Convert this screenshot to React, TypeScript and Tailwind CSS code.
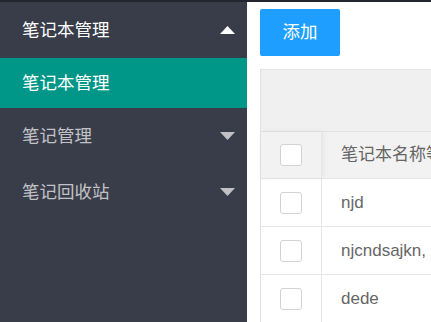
import React from "react";

const font = { fontFamily: '"Liberation Sans", "Noto Sans CJK SC", sans-serif' };

function Tri({ up, color }: { up?: boolean; color: string }) {
  return (
    <svg width="15" height="8" viewBox="0 0 15 8">
      {up ? <polygon points="7.5,0 15,8 0,8" fill={color} /> : <polygon points="0,0 15,0 7.5,8" fill={color} />}
    </svg>
  );
}

function Box() {
  return <div className="w-[22px] h-[22px] border border-[#d2d2d2] rounded-[3px] bg-white" />;
}

export default function App() {
  const rows = ["njd", "njcndsajkn,", "dede"];
  return (
    <div className="w-[431px] h-[322px] flex flex-col overflow-hidden bg-white" style={font}>
      <div className="h-[2px] bg-[#23262e] shrink-0" />
      <div className="flex flex-1 min-h-0">
        <div className="w-[247px] shrink-0 bg-[#393d49] flex flex-col">
          <div className="h-[56px] flex items-center justify-between pl-[22px] pr-[12px] text-white text-[17.5px]">
            <span>笔记本管理</span>
            <Tri up color="#ffffff" />
          </div>
          <div className="h-[50px] flex items-center pl-[22px] bg-[#009688] text-white text-[17.5px]">笔记本管理</div>
          <div className="h-[56px] flex items-center justify-between pl-[22px] pr-[12px] text-[#c2c2c6] text-[17.5px]">
            <span>笔记管理</span>
            <Tri color="#c2c2c6" />
          </div>
          <div className="h-[56px] flex items-center justify-between pl-[22px] pr-[12px] text-[#c2c2c6] text-[17.5px]">
            <span>笔记回收站</span>
            <Tri color="#c2c2c6" />
          </div>
        </div>
        <div className="flex-1 min-w-0 pl-[13px] pt-[7px] flex flex-col">
          <button className="w-[80px] h-[47px] bg-[#1e9fff] text-white text-[17.5px] rounded-[2px] shrink-0">添加</button>
          <div className="mt-[13px] w-[240px] border-l border-t border-[#e2e2e2]">
            <div className="h-[62px] bg-[#f0f0f0] border-b border-[#e2e2e2]" />
            <div className="h-[47px] flex bg-[#f2f2f2] border-b border-[#e6e6e6] text-[#666] text-[17px]">
              <div className="w-[61px] shrink-0 flex items-center justify-center border-r border-[#e6e6e6] shadow-[1px_0_6px_rgba(0,0,0,0.06)]">
                <Box />
              </div>
              <div className="flex items-center pl-[19px] whitespace-nowrap">笔记本名称等</div>
            </div>
            {rows.map((r) => (
              <div key={r} className="h-[48px] flex border-b border-[#e6e6e6] text-[#666] text-[17px]">
                <div className="w-[61px] shrink-0 flex items-center justify-center border-r border-[#e6e6e6]">
                  <Box />
                </div>
                <div className="flex items-center pl-[19px] whitespace-nowrap">{r}</div>
              </div>
            ))}
          </div>
        </div>
      </div>
    </div>
  );
}
